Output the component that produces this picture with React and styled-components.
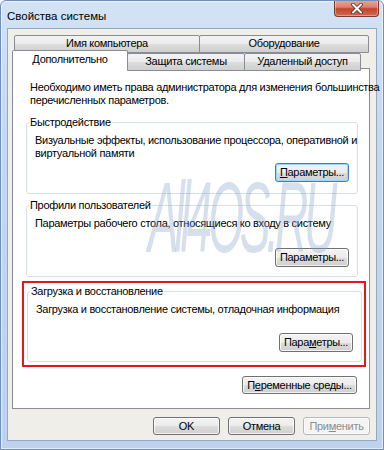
import React from 'react';
import styled, {createGlobalStyle} from 'styled-components';

const Global = createGlobalStyle`
  html, body { margin: 0; padding: 0; background: #fff; }
  * { box-sizing: border-box; }
`;

const Window = styled.div`
  position: relative;
  width: 384px;
  height: 450px;
  display: flex;
  flex-direction: column;
  border: 1px solid #6f8fb8;
  border-radius: 6px 6px 0 0;
  background: linear-gradient(180deg, #d3e3f5 0%, #c4d8ef 30%, #bed3eb 100%);
  box-shadow: inset 0 0 0 1px rgba(255,255,255,0.55);
  font-family: "Liberation Sans", Arial, sans-serif;
  font-size: 11px;
  letter-spacing: -0.3px;
  color: #000;
  overflow: hidden;
`;

const TitleBar = styled.div`
  height: 27px;
  display: flex;
  justify-content: space-between;
  align-items: flex-start;
`;

const Title = styled.div`
  padding: 8px 0 0 6px;
  font-size: 11.5px;
  line-height: 14px;
  letter-spacing: 0;
`;

const Close = styled.div`
  width: 45px;
  height: 17px;
  margin-right: 4px;
  margin-top: -1px;
  border: 1px solid #7a3a33;
  border-top: none;
  border-radius: 0 0 4px 4px;
  background: linear-gradient(180deg, #e9a99b 0%, #d9806d 45%, #c3442d 55%, #cf6a4e 100%);
  box-shadow: inset 0 0 0 1px rgba(255,255,255,0.35);
  display: flex;
  align-items: center;
  justify-content: center;
`;

const Client = styled.div`
  flex: 1;
  margin: 0 6px 8px 6px;
  border: 1px solid #93a8c3;
  background: #efeee9;
  padding: 6px 6px 0 4px;
  display: flex;
  flex-direction: column;
`;

const TabRow = styled.div`
  display: flex;
  height: ${p => p.h}px;
  margin-left: ${p => p.ml || 0}px;
`;

const Tab = styled.div`
  width: ${p => p.w}px;
  height: ${p => p.active ? 19 : 18}px;
  margin-top: ${p => p.mt || 0}px;
  margin-left: -1px;
  border: 1px solid #898c95;
  border-bottom: ${p => p.active ? 'none' : '1px solid #898c95'};
  border-radius: 2px 2px 0 0;
  background: ${p => p.active ? '#fff' : 'linear-gradient(180deg, #f3f3f3 0%, #ebebeb 50%, #dddddd 51%, #cfcfcf 100%)'};
  position: relative;
  z-index: ${p => p.active ? 2 : 1};
  text-align: center;
  line-height: ${p => p.active ? 17 : 15}px;
  &:first-child { margin-left: 0; }
`;

const Panel = styled.div`
  height: 341px;
  border: 1px solid #898c95;
  background: #fff;
  padding: 12px 7px 0 13px;
  display: flex;
  flex-direction: column;
`;

const Text = styled.div`
  line-height: 13px;
  padding-left: ${p => p.pl || 0}px;
  white-space: nowrap;
`;

const Group = styled.fieldset`
  margin: ${p => p.mt || 0}px 0 0 0;
  width: ${p => p.w || 332}px;
  min-width: 0;
  border: 1px solid #d5dfe5;
  border-radius: 3px;
  padding: 5px 8px ${p => p.pb}px 8px;
  display: flex;
  flex-direction: column;
`;

const Legend = styled.legend`
  margin-left: -6px;
  padding: 0 1px;
  line-height: 13px;
`;

const ButtonRow = styled.div`
  display: flex;
  justify-content: flex-end;
  gap: ${p => p.gap || 0}px;
  margin-top: ${p => p.mt || 0}px;
  margin-right: ${p => p.mr || 0}px;
`;

const Button = styled.button`
  width: ${p => p.w}px;
  height: ${p => p.h || 19}px;
  padding: 0;
  border: 1px solid ${p => p.disabled ? '#b4b9bc' : p.focus ? '#3c7fb1' : '#707070'};
  border-radius: 3px;
  background: ${p => p.disabled ? '#f4f4f4' : 'linear-gradient(180deg, #f3f3f3 0%, #ebebeb 50%, #dddddd 51%, #cfcfcf 100%)'};
  box-shadow: inset 0 0 0 1px ${p => p.focus ? '#9ed8f6' : 'rgba(255,255,255,0.75)'};
  font: inherit;
  letter-spacing: -0.3px;
  color: ${p => p.disabled ? '#8d8d8d' : '#000'};
  line-height: 15px;
  u { text-decoration: underline; text-underline-offset: 1px; }
`;

const Highlight = styled.div`
  margin: 4px 0 0 -4px;
  width: 344px;
  border: 2px solid #e5161c;
  padding: 2px 2px 3px 3px;
`;

/* watermark stamped over the screenshot */
const Watermark = styled.div`
  position: absolute;
  left: 147px;
  top: 166px;
  font-family: "Liberation Sans", Arial, sans-serif;
  font-style: italic;
  font-size: 100px;
  letter-spacing: -9px;
  line-height: 1;
  color: rgba(135, 162, 198, 0.34);
  transform: scaleX(0.46);
  transform-origin: left top;
  pointer-events: none;
  white-space: nowrap;
`;

export default function App() {
  return (
    <>
      <Global />
      <Window>
        <TitleBar>
          <Title>Свойства системы</Title>
          <Close>
            <svg width="14" height="11" viewBox="0 0 14 11">
              <path d="M3 1.5 L11 9.5 M11 1.5 L3 9.5" stroke="#5a2a25" strokeWidth="3.6" strokeLinecap="round" />
              <path d="M3 1.5 L11 9.5 M11 1.5 L3 9.5" stroke="#fff" strokeWidth="2" strokeLinecap="round" />
            </svg>
          </Close>
        </TitleBar>
        <Client>
          <TabRow h={18} ml={2}>
            <Tab w={186}>Имя компьютера</Tab>
            <Tab w={170}>Оборудование</Tab>
          </TabRow>
          <TabRow h={15}>
            <Tab w={116} active mt={-3}>Дополнительно</Tab>
            <Tab w={118}>Защита системы</Tab>
            <Tab w={117}>Удаленный доступ</Tab>
          </TabRow>
          <Panel>
            <Text pl={4}>Необходимо иметь права администратора для изменения большинства</Text>
            <Text pl={4}>перечисленных параметров.</Text>
            <Group mt={9} pb={11}>
              <Legend>Быстродействие</Legend>
              <Text>Визуальные эффекты, использование процессора, оперативной и</Text>
              <Text>виртуальной памяти</Text>
              <ButtonRow mt={3}>
                <Button w={74} focus><u>П</u>араметры...</Button>
              </ButtonRow>
            </Group>
            <Group mt={5} pb={9}>
              <Legend>Профили пользователей</Legend>
              <Text>Параметры рабочего стола, относящиеся ко входу в систему</Text>
              <ButtonRow mt={18}>
                <Button w={74}>Параметры...</Button>
              </ButtonRow>
            </Group>
            <Highlight>
              <Group w={335} pb={9}>
                <Legend>Загрузка и восстановление</Legend>
                <Text>Загрузка и восстановление системы, отладочная информация</Text>
                <ButtonRow mt={17}>
                  <Button w={74}>Пара<u>м</u>етры...</Button>
                </ButtonRow>
              </Group>
            </Highlight>
            <ButtonRow mt={9} mr={5}>
              <Button w={115} h={18}>П<u>е</u>ременные среды...</Button>
            </ButtonRow>
          </Panel>
          <ButtonRow mt={8} gap={8}>
            <Button w={67} h={18}>OK</Button>
            <Button w={67} h={18}>Отмена</Button>
            <Button w={67} h={18} disabled>При<u>м</u>енить</Button>
          </ButtonRow>
        </Client>
        <Watermark>All4OS.RU</Watermark>
      </Window>
    </>
  );
}
